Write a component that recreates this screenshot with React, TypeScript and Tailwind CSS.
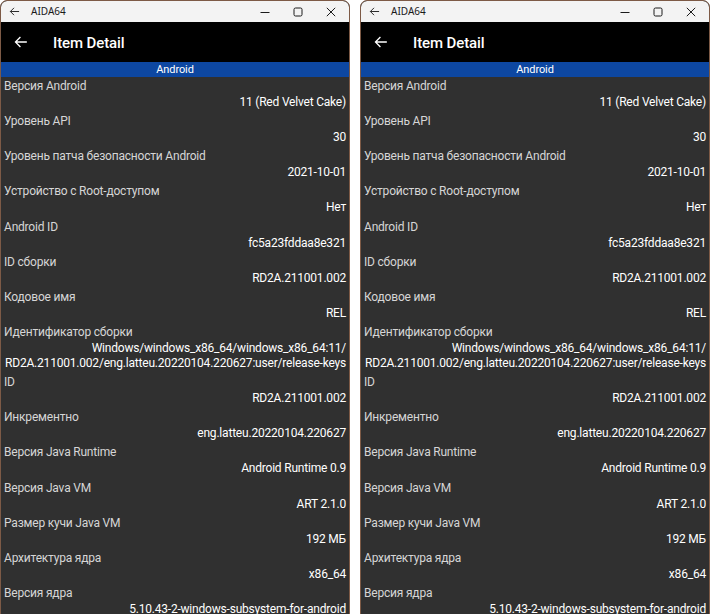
import React from 'react';

const items: { label: string; value: string[] }[] = [
    { label: 'Версия Android', value: ['11 (Red Velvet Cake)'] },
    { label: 'Уровень API', value: ['30'] },
    { label: 'Уровень патча безопасности Android', value: ['2021-10-01'] },
    { label: 'Устройство с Root-доступом', value: ['Нет'] },
    { label: 'Android ID', value: ['fc5a23fddaa8e321'] },
    { label: 'ID сборки', value: ['RD2A.211001.002'] },
    { label: 'Кодовое имя', value: ['REL'] },
    {
        label: 'Идентификатор сборки',
        value: ['Windows/windows_x86_64/windows_x86_64:11/', 'RD2A.211001.002/eng.latteu.20220104.220627:user/release-keys'],
    },
    { label: 'ID', value: ['RD2A.211001.002'] },
    { label: 'Инкрементно', value: ['eng.latteu.20220104.220627'] },
    { label: 'Версия Java Runtime', value: ['Android Runtime 0.9'] },
    { label: 'Версия Java VM', value: ['ART 2.1.0'] },
    { label: 'Размер кучи Java VM', value: ['192 МБ'] },
    { label: 'Архитектура ядра', value: ['x86_64'] },
    { label: 'Версия ядра', value: ['5.10.43-2-windows-subsystem-for-android'] },
];

const TitleBar: React.FC = () => (
    <div className="h-[21px] bg-[#f3f3f3] flex items-center rounded-t-[6px] text-[#1a1a1a]">
        <svg className="ml-[8px] w-[11px] h-[11px]" viewBox="0 0 12 12" fill="none" stroke="currentColor" strokeWidth="1">
            <path d="M11 6H1.5M5.5 2L1.5 6l4 4" />
        </svg>
        <span className="ml-[11px] text-[10px] font-['Noto_Sans',sans-serif]">AIDA64</span>
        <div className="ml-auto flex items-center">
            <svg className="w-[10px] h-[10px]" viewBox="0 0 10 10" stroke="currentColor" strokeWidth="1">
                <path d="M0.5 5.5h9" />
            </svg>
            <svg className="ml-[23px] w-[10px] h-[10px]" viewBox="0 0 10 10" fill="none" stroke="currentColor" strokeWidth="1">
                <rect x="1" y="1" width="8" height="8" rx="1.5" />
            </svg>
            <svg className="ml-[23px] mr-[13px] w-[10px] h-[10px]" viewBox="0 0 10 10" stroke="currentColor" strokeWidth="1">
                <path d="M0.8 0.8l8.4 8.4M9.2 0.8L0.8 9.2" />
            </svg>
        </div>
    </div>
);

const AppWindow: React.FC = () => (
    <div className="w-[350px] h-[640px] shrink-0 border border-[#7d5a46] rounded-t-[7px] overflow-hidden bg-[#303030] font-['Roboto',sans-serif]">
        <TitleBar />
        <div className="h-[40px] bg-black flex items-center text-white">
            <svg className="ml-[13px] w-[14px] h-[14px]" viewBox="0 0 24 24" fill="none" stroke="currentColor" strokeWidth="2.2">
                <path d="M22 12H3M11 3.5L2.5 12l8.5 8.5" />
            </svg>
            <span className="ml-[25px] text-[15px] font-medium tracking-[-0.1px] pt-[2px]">Item Detail</span>
        </div>
        <div className="h-[15px] bg-[#0d47a1] text-white text-[11px] tracking-[-0.1px] leading-[15px] text-center">Android</div>
        <div className="text-[12px] tracking-[-0.2px]">
            {items.map(item => (
                <div key={item.label} className="pt-[1px] pb-[2.15px] px-[3px]">
                    <div className="leading-[17px] text-[#d6d6d6]">{item.label}</div>
                    {item.value.map(v => (
                        <div key={v} className="leading-[15px] text-right text-white whitespace-nowrap">{v}</div>
                    ))}
                </div>
            ))}
        </div>
    </div>
);

const App: React.FC = () => {
    return (
        <div className="w-[710px] h-[614px] bg-white flex justify-between overflow-hidden">
            <AppWindow />
            <AppWindow />
        </div>
    );
};

export default App;
